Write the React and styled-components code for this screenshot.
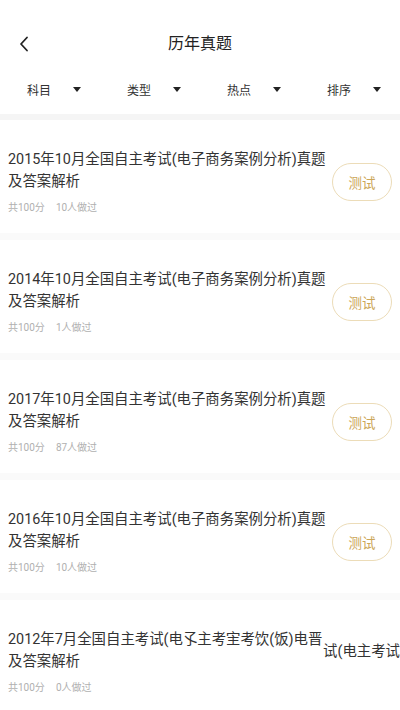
import React from 'react';
import styled, { createGlobalStyle } from 'styled-components';

const GlobalStyle = createGlobalStyle`
  html, body {
    margin: 0;
    padding: 0;
    background: #fff;
    font-family: Roboto, "Noto Sans CJK SC", sans-serif;
  }
  * { box-sizing: border-box; }
`;

const Page = styled.div`
  width: 400px;
  height: 710px;
  overflow: hidden;
  background: #fff;
`;

const Header = styled.div`
  position: relative;
  height: 64px;
  padding-top: 24px;
  display: flex;
  align-items: center;
  justify-content: center;
`;

const BackButton = styled.div`
  position: absolute;
  left: 16px;
  top: 32px;
  width: 16px;
  height: 24px;
  display: flex;
  align-items: center;
  justify-content: center;
`;

const Title = styled.h1`
  margin: 0;
  font-size: 16px;
  font-weight: 400;
  color: #222;
  line-height: 22px;
`;

const FilterBar = styled.div`
  display: grid;
  grid-template-columns: repeat(4, 1fr);
  height: 50px;
  align-items: center;
`;

const Filter = styled.div`
  display: flex;
  align-items: center;
  padding-left: 27px;
  font-size: 12px;
  color: #333;
`;

const FilterLabel = styled.span`
  width: 46px;
`;

const Arrow = styled.span`
  width: 0;
  height: 0;
  border-left: 4px solid transparent;
  border-right: 4px solid transparent;
  border-top: 5px solid #222;
`;

const Divider = styled.div`
  height: ${p => p.$h}px;
  background: ${p => p.$c};
`;

const Item = styled.div`
  display: flex;
  align-items: center;
  padding: 29px 8px 18px;
`;

const Body = styled.div`
  flex: 1;
  min-width: 0;
`;

const TitleLine = styled.div`
  font-size: 14.4px;
  line-height: 22px;
  color: #333;
  white-space: nowrap;
`;

const Meta = styled.div`
  margin-top: 8px;
  display: flex;
  gap: 11px;
  font-size: 10px;
  line-height: 14px;
  color: #b0b0b0;
`;

const TestButton = styled.div`
  flex: none;
  width: 60px;
  height: 38px;
  margin-left: 4px;
  border: 1px solid #ecdcb8;
  border-radius: 19px;
  display: flex;
  align-items: center;
  justify-content: center;
  font-size: 13.5px;
  color: #cca658;
`;

const Overflow = styled.div`
  flex: none;
  align-self: flex-start;
  margin-top: 12px;
  margin-right: -8px;
  font-size: 14.4px;
  line-height: 22px;
  color: #333;
  white-space: nowrap;
`;

const items = [
  { lines: ['2015年10月全国自主考试(电子商务案例分析)真题', '及答案解析'], count: '10人做过' },
  { lines: ['2014年10月全国自主考试(电子商务案例分析)真题', '及答案解析'], count: '1人做过' },
  { lines: ['2017年10月全国自主考试(电子商务案例分析)真题', '及答案解析'], count: '87人做过' },
  { lines: ['2016年10月全国自主考试(电子商务案例分析)真题', '及答案解析'], count: '10人做过' },
  { lines: ['2012年7月全国自主考试(电孓主考宔考饮(饭)电晋', '及答案解析'], count: '0人做过', broken: '试(电主考试' },
];

const filters = ['科目', '类型', '热点', '排序'];

export default function App() {
  return (
    <Page>
      <GlobalStyle />
      <Header>
        <BackButton>
          <svg width="10" height="16" viewBox="0 0 10 16">
            <path d="M8 1.5 L2 8 L8 14.5" fill="none" stroke="#222" strokeWidth="1.8" strokeLinecap="round" strokeLinejoin="round" />
          </svg>
        </BackButton>
        <Title>历年真题</Title>
      </Header>
      <FilterBar>
        {filters.map(f => (
          <Filter key={f}>
            <FilterLabel>{f}</FilterLabel>
            <Arrow />
          </Filter>
        ))}
      </FilterBar>
      <Divider $h={6} $c="#f5f5f5" />
      {items.map((it, i) => (
        <React.Fragment key={i}>
          {i > 0 && <Divider $h={7} $c="#fafafa" />}
          <Item>
            <Body>
              {it.lines.map(l => <TitleLine key={l}>{l}</TitleLine>)}
              <Meta>
                <span>共100分</span>
                <span>{it.count}</span>
              </Meta>
            </Body>
            {it.broken ? <Overflow>{it.broken}</Overflow> : <TestButton>测试</TestButton>}
          </Item>
        </React.Fragment>
      ))}
    </Page>
  );
}
